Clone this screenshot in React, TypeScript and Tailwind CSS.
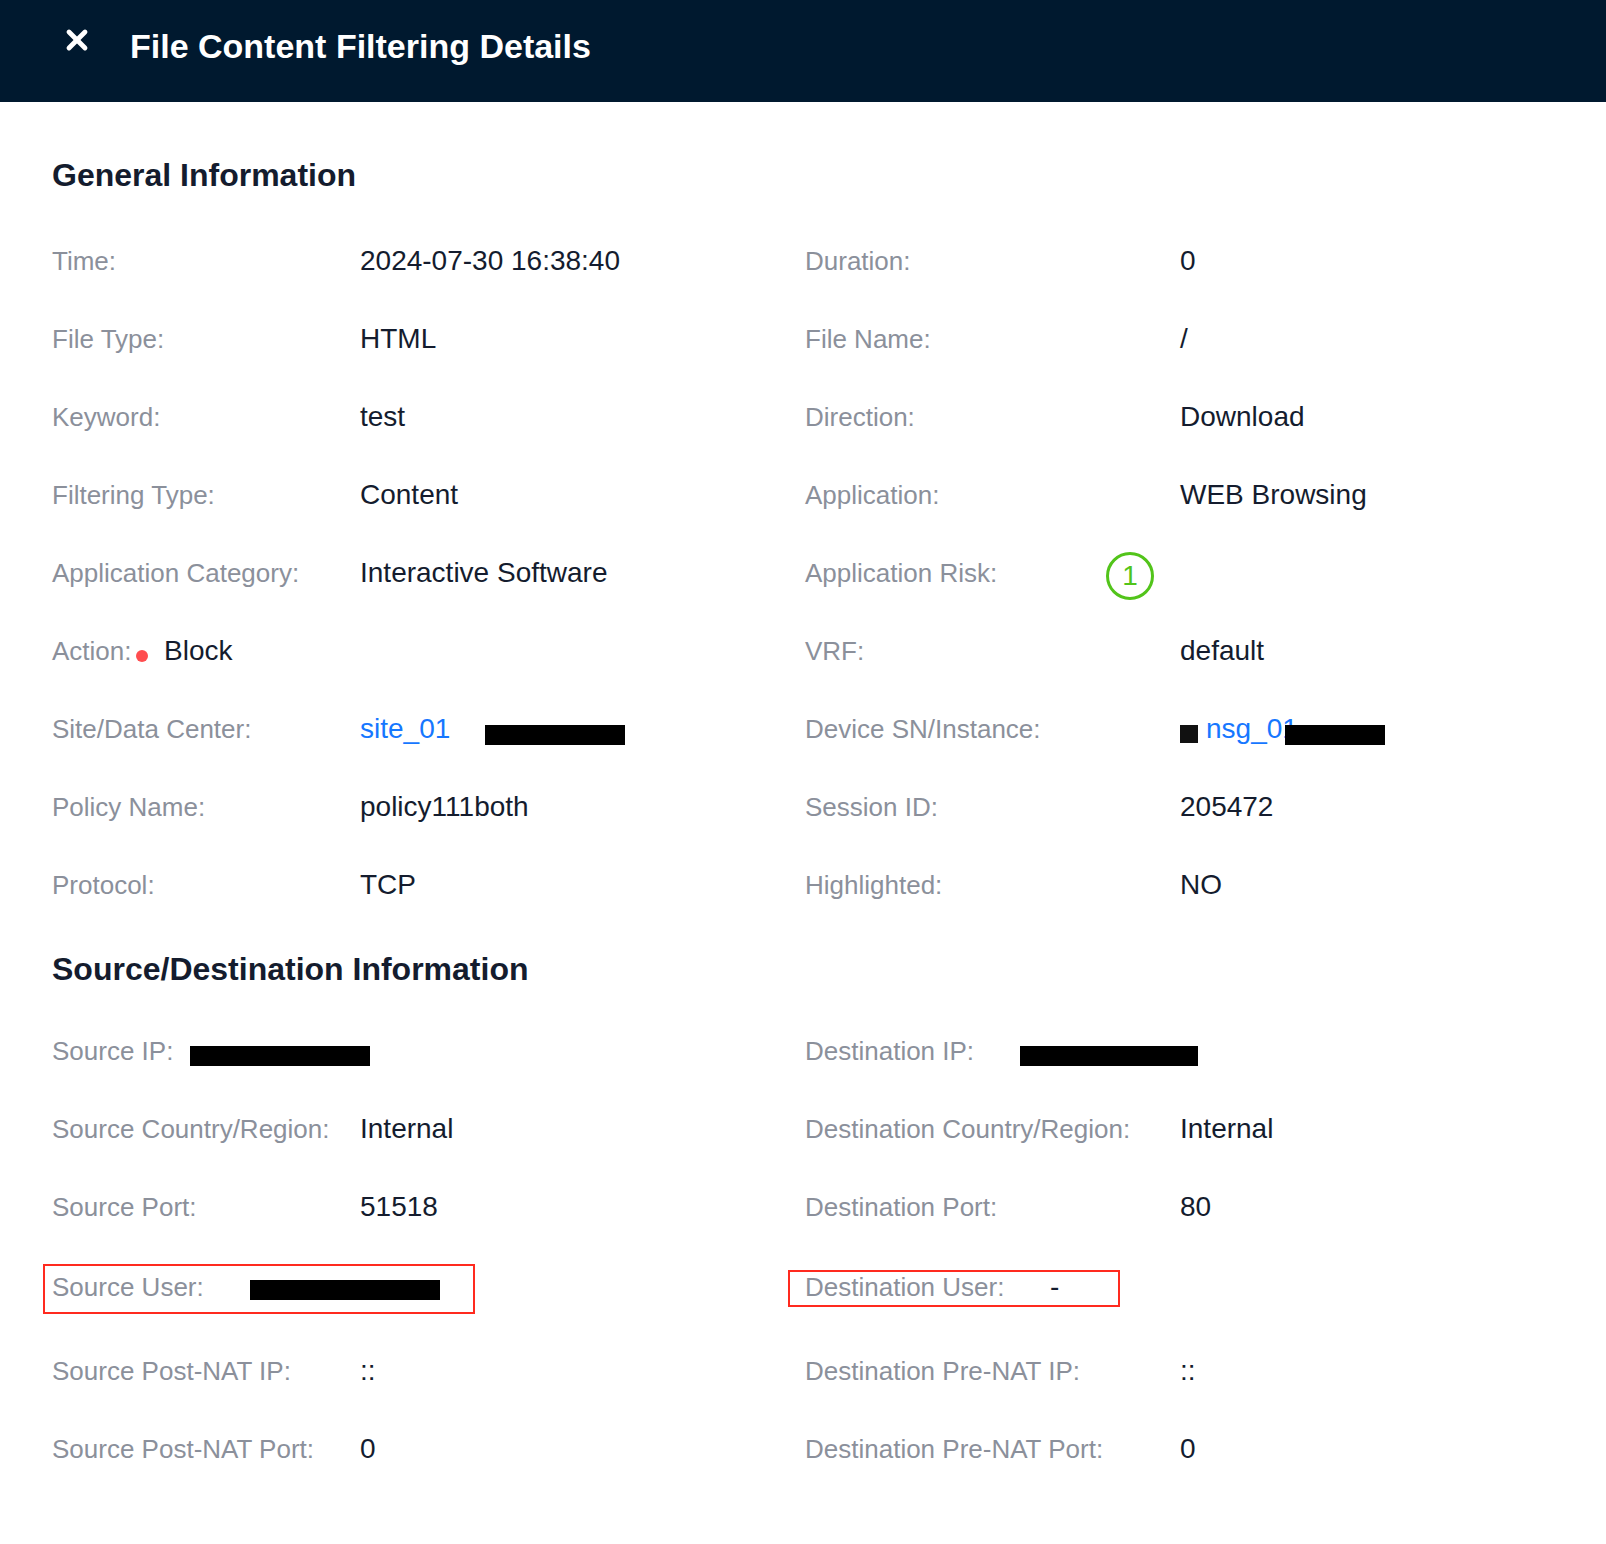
import React from "react";
import { X } from "lucide-react";

const Label = ({ children, className = "w-[308px]" }: { children: React.ReactNode; className?: string }) => (
  <span className={`shrink-0 text-[26px] text-[#8b909b] ${className}`}>{children}</span>
);

const Bar = ({ className }: { className: string }) => <span className={`block h-5 bg-black ${className}`} />;

function Row({ h = "h-[78px]", left, right }: { h?: string; left: React.ReactNode; right: React.ReactNode }) {
  return (
    <div className={`grid grid-cols-[753px_1fr] items-center ${h}`}>
      <div className="flex items-baseline">{left}</div>
      <div className="flex items-baseline">{right}</div>
    </div>
  );
}

const R = ({ label, children }: { label: string; children?: React.ReactNode }) => (
  <>
    <Label className="w-[375px]">{label}</Label>
    {children}
  </>
);
const L = ({ label, children }: { label: string; children?: React.ReactNode }) => (
  <>
    <Label>{label}</Label>
    {children}
  </>
);

export default function App() {
  return (
    <div className="min-h-[1544px] bg-white text-[28px] leading-[34px] text-[#141c2e] font-['Liberation_Sans',Arial,sans-serif]">
      <header className="flex h-[102px] items-start bg-[#00192f] text-white">
        <X className="ml-[61px] mt-[24px] h-[32px] w-[32px]" strokeWidth={3.6} />
        <h1 className="ml-[37px] mt-[27px] text-[34px] leading-[38px] font-bold">File Content Filtering Details</h1>
      </header>

      <main className="pl-[52px]">
        <h2 className="pt-[54px] pb-[28px] text-[32px] leading-[38px] font-bold">General Information</h2>
        <Row left={<L label="Time:">2024-07-30 16:38:40</L>} right={<R label="Duration:">0</R>} />
        <Row left={<L label="File Type:">HTML</L>} right={<R label="File Name:">/</R>} />
        <Row left={<L label="Keyword:">test</L>} right={<R label="Direction:">Download</R>} />
        <Row left={<L label="Filtering Type:">Content</L>} right={<R label="Application:">WEB Browsing</R>} />
        <Row
          left={<L label="Application Category:">Interactive Software</L>}
          right={
            <div className="flex items-center">
              <Label className="w-[301px]">Application Risk:</Label>
              <span className="mt-[6px] flex h-[48px] w-[48px] items-center justify-center rounded-full border-[3.5px] border-[#52c41a] text-[#52c41a]">1</span>
            </div>
          }
        />
        <Row
          left={
            <div className="flex items-center">
              <Label className="w-[84px]">Action:</Label>
              <span className="mt-[10px] h-3 w-3 rounded-full bg-[#ff4d4f]" />
              <span className="ml-[16px]">Block</span>
            </div>
          }
          right={<R label="VRF:">default</R>}
        />
        <Row
          left={
            <div className="flex items-center">
              <Label>Site/Data Center:</Label>
              <span className="text-[#1677ff]">site_01</span>
              <Bar className="ml-[35px] mt-[12px] w-[140px]" />
            </div>
          }
          right={
            <div className="flex items-center">
              <Label className="w-[375px]">Device SN/Instance:</Label>
              <span className="mt-[9px] block h-[18px] w-[18px] bg-[#111111]" />
              <span className="ml-[8px] text-[#1677ff]">nsg_01</span>
              <Bar className="ml-[-13px] mt-[12px] w-[100px]" />
            </div>
          }
        />
        <Row left={<L label="Policy Name:">policy111both</L>} right={<R label="Session ID:">205472</R>} />
        <Row left={<L label="Protocol:">TCP</L>} right={<R label="Highlighted:">NO</R>} />

        <h2 className="pt-[26px] pb-[24px] text-[32px] leading-[38px] font-bold">Source/Destination Information</h2>
        <Row
          left={
            <div className="flex items-center">
              <Label className="w-[138px]">Source IP:</Label>
              <Bar className="mt-[10px] w-[180px]" />
            </div>
          }
          right={
            <div className="flex items-center">
              <Label className="w-[215px]">Destination IP:</Label>
              <Bar className="mt-[10px] w-[178px]" />
            </div>
          }
        />
        <Row left={<L label="Source Country/Region:">Internal</L>} right={<R label="Destination Country/Region:">Internal</R>} />
        <Row left={<L label="Source Port:">51518</L>} right={<R label="Destination Port:">80</R>} />
        <Row
          h="h-[82px]"
          left={
            <div className="relative flex items-center">
              <Label className="w-[198px]">Source User:</Label>
              <Bar className="mt-[5px] w-[190px]" />
              <span className="absolute left-[-9px] top-[-6px] h-[50px] w-[432px] border-2 border-[#ff2a1f]" />
            </div>
          }
          right={
            <div className="relative flex items-center">
              <Label className="w-[245px]">Destination User:</Label>
              <span>-</span>
              <span className="absolute left-[-17px] top-0 h-[37px] w-[332px] border-2 border-[#ff2a1f]" />
            </div>
          }
        />
        <Row h="h-[86px]" left={<L label="Source Post-NAT IP:">::</L>} right={<R label="Destination Pre-NAT IP:">::</R>} />
        <Row h="h-[70px]" left={<L label="Source Post-NAT Port:">0</L>} right={<R label="Destination Pre-NAT Port:">0</R>} />
      </main>
    </div>
  );
}
